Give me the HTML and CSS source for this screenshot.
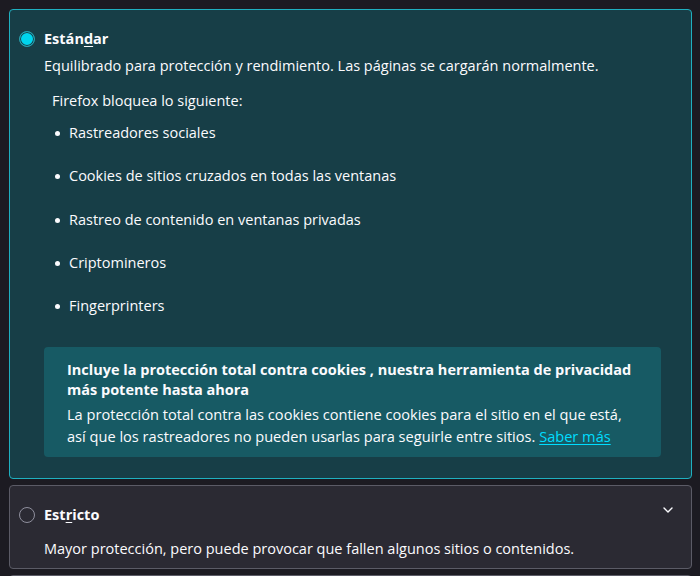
FILE: index.html
```html
<!DOCTYPE html>
<html lang="es">
<head>
<meta charset="utf-8">
<title>Protección mejorada contra rastreo</title>
<link rel="stylesheet" href="styles.css">
</head>
<body>
<div class="page">
  <section class="card card-selected">
    <div class="head">
      <span class="radio radio-on"></span>
      <span class="title">Están<u>d</u>ar</span>
    </div>
    <div class="body">
      <p class="desc">Equilibrado para protección y rendimiento. Las páginas se cargarán normalmente.</p>
      <p class="blocks">Firefox bloquea lo siguiente:</p>
      <ul class="list">
        <li>Rastreadores sociales</li>
        <li>Cookies de sitios cruzados en todas las ventanas</li>
        <li>Rastreo de contenido en ventanas privadas</li>
        <li>Criptomineros</li>
        <li>Fingerprinters</li>
      </ul>
      <div class="info">
        <p class="info-title">Incluye la protección total contra cookies , nuestra herramienta de privacidad más potente hasta ahora</p>
        <p class="info-text">La protección total contra las cookies contiene cookies para el sitio en el que está, así que los rastreadores no pueden usarlas para seguirle entre sitios. <a href="#" class="link">Saber más</a></p>
      </div>
    </div>
  </section>
  <section class="card card-plain">
    <div class="head">
      <span class="radio"></span>
      <span class="title">Est<u>r</u>icto</span>
    </div>
    <svg class="chevron" width="12" height="8" viewBox="0 0 12 8"><path d="M2 2 L6 6 L10 2" fill="none" stroke="#fbfbfe" stroke-width="1.4" stroke-linecap="round" stroke-linejoin="round"/></svg>
    <div class="body">
      <p class="desc desc-plain">Mayor protección, pero puede provocar que fallen algunos sitios o contenidos.</p>
    </div>
  </section>
  <section class="card card-plain card-next"></section>
</div>
</body>
</html>
```
FILE: styles.css
```css
html, body {
  margin: 0;
  padding: 0;
  background: #1c1b22;
  height: 100%;
  overflow: hidden;
}
body {
  font-family: "Open Sans", "Noto Sans", sans-serif;
  font-size: 14.5px;
  color: #fbfbfe;
}
.page {
  padding: 9px 8px 0 9px;
  display: flex;
  flex-direction: column;
  gap: 6px;
}
.card {
  position: relative;
  border-radius: 4px;
  border: 1px solid;
  padding: 19px 9px 21px 9px;
}
.card-selected {
  background: #173e47;
  border-color: #1fb0c0;
}
.card-plain {
  background: #2b2a33;
  border-color: #5b5b66;
  padding-bottom: 9px;
}
.card-next {
  height: 20px;
  padding: 0;
}
.head {
  display: flex;
  align-items: center;
  gap: 9px;
  height: 20px;
}
.radio {
  width: 14px;
  height: 14px;
  border-radius: 50%;
  border: 1px solid #8f8f9d;
  box-sizing: content-box;
}
.radio-on {
  border-color: #2a9fad;
  background: #00d5ee;
  box-shadow: inset 0 0 0 1px #173e47;
}
.title {
  font-weight: 700;
  font-size: 14.5px;
  line-height: 20px;
}
.title u {
  text-decoration-thickness: 1px;
  text-underline-offset: 2px;
}
.body {
  padding-left: 25px;
}
p {
  margin: 0;
}
.desc {
  margin-top: 7px;
  line-height: 20px;
}
.desc-plain {
  margin-top: 14px;
}
.blocks {
  margin-top: 15px;
  margin-left: 8px;
  line-height: 20px;
}
.list {
  list-style: none;
  margin: 12px 0 0 0;
  padding: 0 0 0 25px;
}
.list li {
  position: relative;
  line-height: 20px;
  margin-top: 23.3px;
}
.list li:first-child {
  margin-top: 0;
}
.list li::before {
  content: "";
  position: absolute;
  left: -14px;
  top: 8px;
  width: 5px;
  height: 5px;
  border-radius: 50%;
  background: #fbfbfe;
}
.info {
  margin-top: 31px;
  margin-right: 21px;
  background: #175a64;
  border-radius: 4px;
  padding: 13px 20px 10px 23px;
}
.info-title {
  font-weight: 700;
  font-size: 14.5px;
  line-height: 20px;
}
.info-text {
  margin-top: 3px;
  margin-right: 14px;
  line-height: 22px;
  font-size: 14.6px;
}
.link {
  color: #00ddff;
  text-decoration: underline;
  text-underline-offset: 2px;
}
.chevron {
  position: absolute;
  top: 20px;
  right: 17px;
}
```
